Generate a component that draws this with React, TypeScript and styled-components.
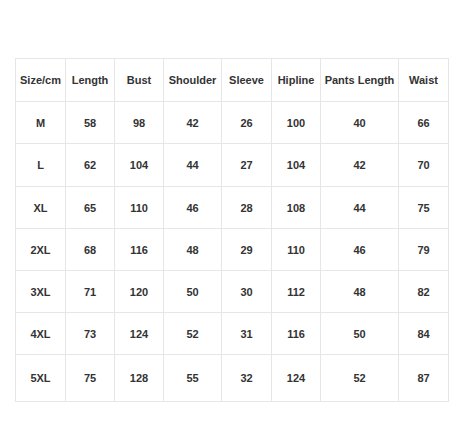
import styled, { createGlobalStyle } from "styled-components";

const GlobalStyle = createGlobalStyle`
  html, body {
    margin: 0;
    padding: 0;
    background: #ffffff;
  }
  body {
    font-family: "Liberation Sans", Arial, sans-serif;
  }
`;

const headers = [
  "Size/cm",
  "Length",
  "Bust",
  "Shoulder",
  "Sleeve",
  "Hipline",
  "Pants Length",
  "Waist",
];

const colWidths = [50, 49, 49, 58, 50, 49, 78, 50];

const rows = [
  ["M", 58, 98, 42, 26, 100, 40, 66],
  ["L", 62, 104, 44, 27, 104, 42, 70],
  ["XL", 65, 110, 46, 28, 108, 44, 75],
  ["2XL", 68, 116, 48, 29, 110, 46, 79],
  ["3XL", 71, 120, 50, 30, 112, 48, 82],
  ["4XL", 73, 124, 52, 31, 116, 50, 84],
  ["5XL", 75, 128, 55, 32, 124, 52, 87],
];

const rowHeights = [42, 43, 42, 42, 42, 42, 47];

export default function App() {
  return (
    <>
      <GlobalStyle />
      <Page>
        <SizeTable>
          <colgroup>
            {colWidths.map((w, i) => (
              <col key={i} style={{ width: w }} />
            ))}
          </colgroup>
          <thead>
            <Row $height={43}>
              {headers.map((h) => (
                <HeadCell key={h}>{h}</HeadCell>
              ))}
            </Row>
          </thead>
          <tbody>
            {rows.map((r, i) => (
              <Row key={r[0]} $height={rowHeights[i]}>
                {r.map((v, j) => (
                  <Cell key={j}>{v}</Cell>
                ))}
              </Row>
            ))}
          </tbody>
        </SizeTable>
      </Page>
    </>
  );
}

const Page = styled.div`
  padding: 58px 0 0 15px;
  width: 463px;
  height: 433px;
  box-sizing: border-box;
`;

const SizeTable = styled.table`
  border-collapse: collapse;
  table-layout: fixed;
  width: 434px;
  color: #333333;
  font-size: 11px;
  font-weight: bold;
`;

const Row = styled.tr<{ $height: number }>`
  height: ${(p) => p.$height}px;
`;

const HeadCell = styled.th`
  border: 1px solid #e6e6e6;
  padding: 0;
  text-align: center;
  white-space: nowrap;
  font-weight: bold;
`;

const Cell = styled.td`
  border: 1px solid #e6e6e6;
  padding: 0;
  text-align: center;
`;
